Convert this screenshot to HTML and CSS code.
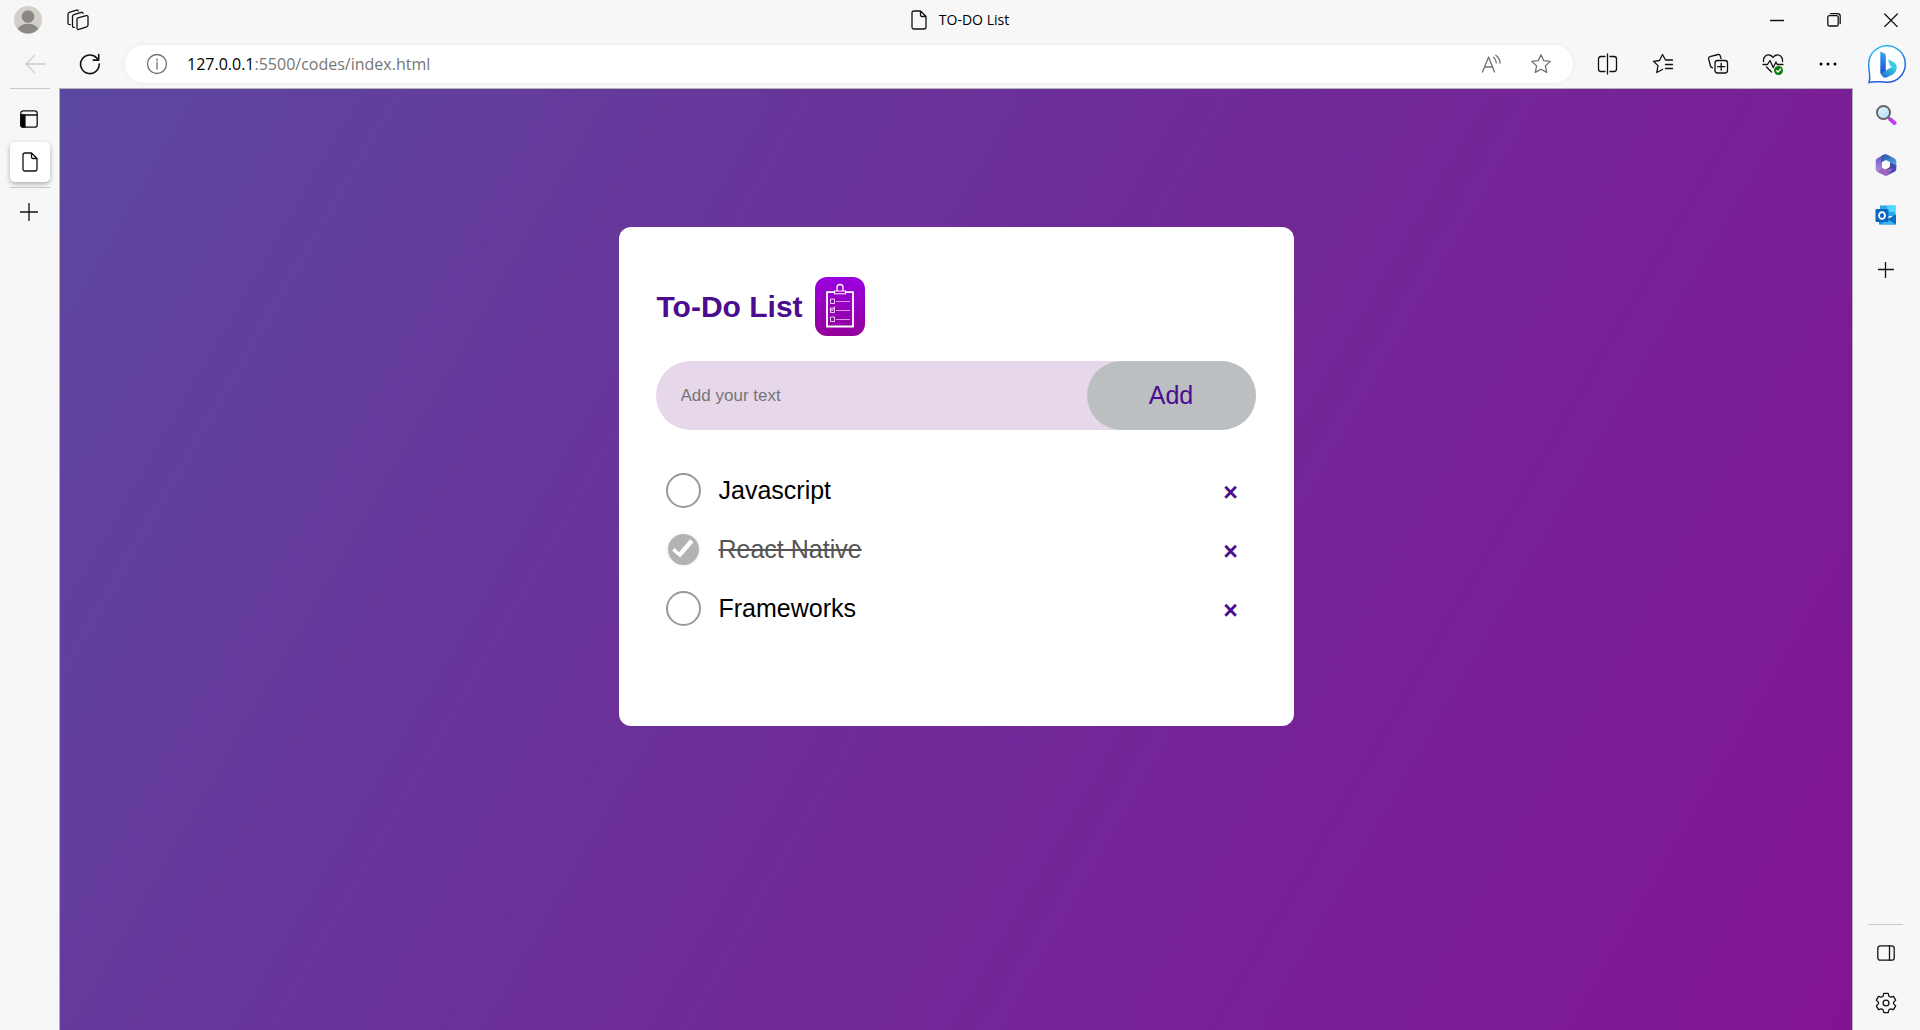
FILE: index.html
```html
<!DOCTYPE html>
<html lang="en">
<head>
<meta charset="utf-8">
<meta name="viewport" content="width=device-width, initial-scale=1">
<title>TO-DO List</title>
<link rel="stylesheet" href="styles.css">
</head>
<body>
<div class="browser">
  <header class="titlebar">
    <div class="titlebar-start">
      <button class="icon-button profile" aria-label="Profile">
        <svg width="28" height="28" viewBox="0 0 28 28"><defs><clipPath id="face"><circle cx="14" cy="14" r="13.5"/></clipPath></defs><circle cx="14" cy="14" r="14" fill="#d3d0cb"/><g fill="#8b8784" clip-path="url(#face)"><circle cx="14" cy="10.5" r="6.3"/><ellipse cx="14" cy="25" rx="11" ry="7.2"/></g></svg>
      </button>
      <button class="icon-button" aria-label="Workspaces">
        <svg width="22" height="22" viewBox="0 0 22 22" class="line"><path d="M11 8.9 19.2 6.6Q21 6.2 21 8V16Q21 17.4 19.7 17.8L12 20.3Q10 20.8 10 19V10.4Q10 9.2 11 8.9Z"/><path d="M7.5 18.4Q5.5 18.7 5.5 17V7.4Q5.5 6 6.8 5.6L14.3 3.3Q15.8 3 16 4.4"/><path d="M3.3 15.6Q1 15.8 1 14V5.4Q1 4 2.3 3.4L9.5 1.1Q11 .8 11.2 2"/></svg>
      </button>
    </div>
    <div class="window-title">
      <svg width="16" height="20" viewBox="0 0 16 20" class="line"><path d="M3 1H9.5L15 6.5V17Q15 19 13 19H3Q1 19 1 17V3Q1 1 3 1ZM9.5 1V5Q9.5 6.5 11 6.5H15"/></svg>
      <span>TO-DO List</span>
    </div>
    <div class="window-controls">
      <button class="icon-button" aria-label="Minimize"><svg width="14" height="14" viewBox="0 0 14 14" class="line"><path d="M.5 7.5H13.5"/></svg></button>
      <button class="icon-button" aria-label="Restore"><svg width="14" height="14" viewBox="0 0 14 14" class="line"><rect x=".8" y="2.6" width="10.4" height="10.4" rx="1.6"/><path d="M3.5.7H10.6Q13.2.7 13.2 3.3V10.6"/></svg></button>
      <button class="icon-button" aria-label="Close"><svg width="14" height="14" viewBox="0 0 14 14" class="line"><path d="M.7 1 13.3 13.6M13.3 1 .7 13.6"/></svg></button>
    </div>
  </header>

  <nav class="toolbar" aria-label="Navigation">
    <button class="icon-button" aria-label="Back" disabled><svg width="22" height="20" viewBox="0 0 22 20" class="line faint"><path d="M21 10H2M10.5 1.5 2 10 10.5 18.5"/></svg></button>
    <button class="icon-button" aria-label="Refresh"><svg width="22" height="22" viewBox="0 0 22 22" class="line bold"><path d="M20.2 11A9.3 9.3 0 1 1 17.8 5L19.5 7M19.7 1.5V7.1H14.2"/></svg></button>
    <div class="address">
      <svg width="22" height="22" viewBox="0 0 22 22" class="line grey"><circle cx="11" cy="11" r="9.5"/><path d="M11 9.5V16M11 6V7.6"/></svg>
      <p class="url"><span class="host">127.0.0.1</span>:5500/codes/index.html</p>
      <button class="icon-button" aria-label="Read aloud"><svg width="22" height="20" viewBox="0 0 22 20" class="line grey"><path d="M1.5 18 7.6 3 13.5 18M3.5 13H11.5M12.5 3.2Q15 5 15.3 8.8M14.8 1.2Q18.8 4 19 9"/></svg></button>
      <button class="icon-button" aria-label="Add to favorites"><svg width="22" height="22" viewBox="0 0 22 22" class="line grey"><path d="M11 1.8 13.7 7.7 20.2 8.4 15.4 12.9 16.7 19.4 11 16.2 5.3 19.4 6.6 12.9 1.8 8.4 8.3 7.7Z"/></svg></button>
    </div>
    <button class="icon-button" aria-label="Split screen"><svg width="22" height="22" viewBox="0 0 22 22" class="line"><path d="M10.500 1V21M8 3.500H4Q1.500 3.500 1.500 6V16Q1.500 18.500 4 18.500H8M13 3.500H17Q19.500 3.500 19.500 6V16Q19.500 18.500 17 18.500H13"/></svg></button>
    <button class="icon-button" aria-label="Favorites"><svg width="22" height="22" viewBox="0 0 22 22" class="line"><path d="M20.500 7H13.500L10.500 1.500 7.500 7.500 1.500 8.300 6 12.600 4.800 19.500 10.500 16.500M13.500 11.500H20.500M13.500 15.500H20.500"/></svg></button>
    <button class="icon-button" aria-label="Collections"><svg width="22" height="22" viewBox="0 0 22 22" class="line"><rect x="8" y="7.500" width="12.500" height="12.500" rx="2.500"/><path d="M14.200 10.200V17.300M10.700 13.700H17.800M14 5.500 13.300 3Q12.800 1.200 11 1.500L3 3.600Q1.300 4 1.600 5.800L3.300 12.500Q3.800 14.500 5.500 14.800"/></svg></button>
    <button class="icon-button" aria-label="Browser essentials"><svg width="22" height="22" viewBox="0 0 22 22" class="line"><path d="M1.500 8.500C1 3.500 4.500 1.500 7.300 2 9.500 2.300 11 4.500 11 4.500S12.500 2.300 14.700 2C17.500 1.500 21 3.500 20.500 8.500M1 11.500H5.500L8 7.500 11.200 14.500 14 9 15.200 11.500H21M4.500 14 9.500 19"/><circle cx="16.500" cy="17.500" r="4.500" fill="#107c10" stroke="none"/><path d="M14.500 17.600 16 19 18.600 16.200" stroke="#fff"/></svg></button>
    <button class="icon-button" aria-label="Settings and more"><svg width="22" height="22" viewBox="0 0 22 22"><circle cx="4" cy="11" r="1.500"/><circle cx="11" cy="11" r="1.500"/><circle cx="18" cy="11" r="1.500"/></svg></button>
    <button class="icon-button bing" aria-label="Bing Chat"><svg width="40" height="40" viewBox="0 0 40 40"><defs><linearGradient id="ring" x1="0" y1="0" x2=".4" y2="1"><stop stop-color="#2fc5f5"/><stop offset="1" stop-color="#1f58d8"/></linearGradient><linearGradient id="stem" x1="0" y1="0" x2="0" y2="1"><stop stop-color="#36a9f5"/><stop offset="1" stop-color="#1746cf"/></linearGradient><linearGradient id="bowl" x1="0" y1="1" x2="1" y2="0"><stop stop-color="#2163dd"/><stop offset="1" stop-color="#3fdcd8"/></linearGradient></defs><path d="M2 38.500C4 33 1.700 29 1.700 20A18.300 18.300 0 1 1 20 38.300C12 38.300 9 36.500 2 38.500Z" fill="#fff" stroke="url(#ring)" stroke-width="1.500"/><path d="M13.300 7.500 17.200 9.200Q18.800 10 18.800 12V27L14.700 31Q13.300 30 13.300 28Z" fill="url(#stem)"/><path d="M21 15.300 26.300 18Q30.500 20.200 29.500 25.500L24.500 22.500Q23 22 22.300 19.500Z" fill="#38cbe8"/><path d="M14 29.500 25 22.700 29.600 25Q29 28.500 26 30.300L19.500 33.500Q15.500 34.500 14 29.500Z" fill="url(#bowl)"/></svg></button>
  </nav>

  <aside class="rail rail-left" aria-label="Tabs">
    <hr>
    <button class="icon-button tab-actions" aria-label="Tab actions"><svg width="18" height="18" viewBox="0 0 18 18" class="line"><rect x=".8" y=".8" width="16.400" height="16.400" rx="2.500"/><path d="M1 5H17"/><path d="M.8 5H5V17.200H3Q.8 17 .8 15Z" fill="#000"/></svg></button>
    <button class="icon-button tab" aria-label="TO-DO List"><svg width="16" height="20" viewBox="0 0 16 20" class="line"><path d="M3 1H9.500L15 6.500V17Q15 19 13 19H3Q1 19 1 17V3Q1 1 3 1ZM9.500 1V5Q9.500 6.500 11 6.500H15"/></svg></button>
    <hr>
    <button class="icon-button new-tab" aria-label="New tab"><svg width="18" height="18" viewBox="0 0 18 18" class="line"><path d="M9 .5V17.500M.5 9H17.500"/></svg></button>
  </aside>

  <main class="page">
    <section class="todo">
      <h1 class="todo-title">To-Do List
        <svg width="50" height="59" viewBox="0 0 50 59"><defs><linearGradient id="badge" x1="0" y1="0" x2="0" y2="1"><stop stop-color="#9b00e0"/><stop offset="1" stop-color="#930099"/></linearGradient></defs><rect width="50" height="59" rx="12" fill="url(#badge)"/><g fill="none" stroke="#fff"><path d="M19 15.200H12V49.500H38V15.200H31" stroke-width="1.800"/><rect x="19.500" y="14" width="11" height="2.800"/><path d="M22 14V10.500Q22 7.500 25 7.500T28 10.500V14" stroke-width="1.300"/><g stroke-width=".8"><path d="M15.500 22H19.500V26.500H15.500ZM15.500 31H19.500V35.500H15.500ZM15.500 40H19.500V44.500H15.500ZM15.500 32 17 34 20 29.500"/><path d="M21 24.500H35M21 33.500H35M21 42.500H35" stroke-opacity=".75"/></g></g></svg>
      </h1>
      <form class="entry">
        <input class="entry-text" type="text" placeholder="Add your text" aria-label="New task">
        <button class="entry-add" type="button">Add</button>
      </form>
      <ul class="tasks">
        <li class="task"><input type="checkbox" id="task-1"><label for="task-1">Javascript</label><button class="remove" aria-label="Remove Javascript">×</button></li>
        <li class="task"><input type="checkbox" id="task-2" checked><label for="task-2">React Native</label><button class="remove" aria-label="Remove React Native">×</button></li>
        <li class="task"><input type="checkbox" id="task-3"><label for="task-3">Frameworks</label><button class="remove" aria-label="Remove Frameworks">×</button></li>
      </ul>
    </section>
  </main>

  <aside class="rail rail-right" aria-label="Sidebar">
    <button class="icon-button" aria-label="Search"><svg width="22" height="22" viewBox="0 0 22 22"><defs><linearGradient id="lens" x1="0" y1="0" x2="1" y2="1"><stop stop-color="#e8f7ff"/><stop offset="1" stop-color="#addcf8"/></linearGradient></defs><path d="M13 13 15.500 15.500" stroke="#555" stroke-width="2"/><path d="M15.500 15.500 19.500 19" stroke="#c239f0" stroke-width="4" stroke-linecap="round"/><circle cx="8.500" cy="8.500" r="6.500" fill="url(#lens)" stroke="#666" stroke-width="2"/></svg></button>
    <button class="icon-button" aria-label="Microsoft 365"><svg width="22" height="22" viewBox="0 0 22 22"><defs><linearGradient id="m1" x1="0" y1="0" x2="0" y2="1"><stop stop-color="#5c59c9"/><stop offset="1" stop-color="#b58be0"/></linearGradient><linearGradient id="m2" x1="0" y1="0" x2="1" y2="1"><stop stop-color="#294a9e"/><stop offset="1" stop-color="#55b5f1"/></linearGradient></defs><path d="M8 1 2 4.500Q.7 5.500.7 7V15Q.7 17 2.300 18L7 15.500V8Q7 6.500 8 5.500L13 2Q10.500-.5 8 1Z" fill="url(#m1)"/><path d="M8 1Q10.500-.5 13 1L19.500 4.500Q21.300 5.500 21.300 7.500V13L15 10.500V8L11 6 6 8.500V5Q6 2.300 8 1Z" fill="url(#m2)"/><path d="M15 9 21.300 11V15Q21.300 16.500 20 17.500L12 21.500 9 16.500 13 14Q15 13 15 11.500Z" fill="#454cae"/><path d="M2.300 18 7 14 10.500 15.500 18 14.500 12.500 21.200Q11 22.300 9.500 21.500Z" fill="#9a65bd"/><circle cx="11" cy="11" r="3.600" fill="#fff"/></svg></button>
    <button class="icon-button" aria-label="Outlook"><svg width="22" height="22" viewBox="0 0 22 22"><path d="M5 1.500H20.500V12H5Z" fill="#28a8ea"/><path d="M12 1.500H20.500V8H12Z" fill="#50d9ff"/><path d="M5 8H13V15H5Z" fill="#0a5ba8"/><path d="M4 20.500V12L13 15 21 10.500V20.500Z" fill="#1490df"/><path d="M13 15 21 10.500V20.500Z" fill="#0b70bd"/><path d="M12 15.500 21.500 20.500H6Z" fill="#35b8f1"/><rect x=".5" y="5" width="13" height="13" rx="1.200" fill="#0867bc"/><ellipse cx="7" cy="11.500" rx="3" ry="3.400" fill="none" stroke="#fff" stroke-width="1.800"/></svg></button>
    <button class="icon-button customize" aria-label="Customize"><svg width="16" height="16" viewBox="0 0 16 16" class="line"><path d="M7.500.5V15.500M.5 7.500H15.500"/></svg></button>
    <hr>
    <button class="icon-button" aria-label="Hide sidebar"><svg width="18" height="16" viewBox="0 0 18 16" class="line"><rect x=".8" y=".8" width="16.400" height="14.400" rx="2.500"/><path d="M12.500 1V15"/></svg></button>
    <button class="icon-button" aria-label="Settings"><svg width="22" height="22" viewBox="0 0 22 22" class="line"><circle cx="11" cy="11" r="2.900"/><path d="M8.800 1.300H13.200L13.900 4.200 15.600 5.200 18.500 4.300 20.700 8.100 18.600 10.100V11.900L20.700 13.900 18.500 17.700 15.600 16.800 13.900 17.800 13.200 20.700H8.800L8.100 17.800 6.400 16.800 3.500 17.700 1.300 13.900 3.400 11.900V10.100L1.300 8.100 3.500 4.300 6.400 5.200 8.100 4.200Z"/></svg></button>
  </aside>
</div>
</body>
</html>
```
FILE: styles.css
```css
* { box-sizing: border-box; }

body {
  margin: 0;
  background: #f7f7f7;
  color: #000;
  font-family: "Open Sans", "Noto Sans", sans-serif;
}

button, input { margin: 0; font: inherit; }

.browser {
  display: grid;
  grid-template-columns: 59px 1fr 67px;
  grid-template-rows: 40px 48px 1fr;
  min-height: 100vh;
}

.icon-button {
  display: flex;
  align-items: center;
  justify-content: center;
  padding: 0;
  border: 0;
  background: none;
}

.line {
  fill: none;
  stroke: #111;
  stroke-width: 1.3;
  stroke-linecap: round;
  stroke-linejoin: round;
}
.line.bold { stroke-width: 1.6; }
.line.grey { stroke: #707070; }
.line.faint { stroke: #cdcdcd; }

/* Title bar */
.titlebar {
  grid-column: 1 / -1;
  display: grid;
  grid-template-columns: 1fr auto 1fr;
  align-items: center;
}
.titlebar-start { display: flex; gap: 25px; padding-left: 14px; }
.window-title {
  display: flex;
  align-items: center;
  gap: 12px;
  font-size: 14px;
  line-height: 20px;
}
.window-controls { display: flex; justify-content: flex-end; padding-right: 1px; }
.window-controls .icon-button { width: 57px; height: 40px; }

/* Toolbar */
.toolbar {
  grid-column: 1 / -1;
  display: flex;
  align-items: center;
  padding: 0 2px 0 7px;
}
.toolbar > .icon-button { width: 55px; height: 40px; }
.toolbar > .bing { width: 63px; }
.address {
  flex: 1;
  display: flex;
  align-items: center;
  height: 38px;
  margin: 0 7px 0 8px;
  padding: 0 8px 0 21px;
  border-radius: 19px;
  background: #fff;
  box-shadow: 0 0 5px rgba(0, 0, 0, 0.06);
}
.address .icon-button { width: 49px; height: 38px; }
.url {
  flex: 1;
  margin: 0 0 0 19px;
  color: #767676;
  font-size: 16px;
  line-height: 24px;
}
.host { color: #000; }

/* Side rails */
.rail { display: flex; flex-direction: column; align-items: center; }
.rail hr { width: 40px; height: 1px; margin: 0; border: 0; background: #c8c8c8; }
.rail-left .icon-button { width: 40px; height: 40px; }
.rail-left .tab-actions { margin: 10px 0 3px; padding-right: 2px; }
.rail-left .tab {
  margin-bottom: 5px;
  border-radius: 5px;
  background: #fff;
  box-shadow: 0 2px 5px rgba(0, 0, 0, 0.3);
}
.rail-left .new-tab { margin-top: 4px; padding-right: 2px; }
.rail-right { padding: 2px 2px 2px 0; }
.rail-right .icon-button { width: 50px; height: 50px; }
.rail-right .customize { margin: 5px 0 auto; }
.rail-right hr { width: 35px; margin-bottom: 3px; }

/* Page */
.page {
  padding: 138px 20px 40px;
  border: 1px solid #b4b4b4;
  border-bottom: 0;
  background: linear-gradient(120deg, #5c489f, #6f2b98 50%, #821494);
  font-family: "Liberation Sans", Arial, sans-serif;
}
.todo {
  max-width: 675px;
  margin: 0 auto;
  padding: 50px 38px 88px 37px;
  border-radius: 12px;
  background: #fff;
}
.todo-title {
  display: flex;
  align-items: center;
  gap: 12px;
  margin: 0 0 25px;
  padding-left: 1px;
  color: #4b0c8f;
  font-size: 30px;
  line-height: 34px;
}
.entry {
  display: flex;
  height: 69px;
  margin-bottom: 31px;
  border-radius: 35px;
  background: #e6d8ea;
}
.entry-text {
  flex: 1;
  min-width: 0;
  padding: 0 25px;
  border: 0;
  outline: 0;
  background: none;
  font-size: 17px;
}
.entry-text::placeholder { color: #757575; }
.entry-add {
  width: 169px;
  border: 0;
  border-radius: 35px;
  background: #bbbfc2;
  color: #4b0c8f;
  font-size: 25px;
}
.tasks { margin: 0; padding: 0 0 0 10px; list-style: none; }
.task {
  display: flex;
  align-items: center;
  height: 59px;
  font-size: 25px;
}
.task input {
  width: 35px;
  height: 35px;
  border: 2px solid #999;
  border-radius: 50%;
  background: #fff;
  appearance: none;
}
.task input:checked {
  border-color: #f8f8f8;
  background: #b3b3b3;
}
.task input:checked::before {
  content: "";
  display: block;
  height: 100%;
  background: #fff;
  clip-path: polygon(15% 54%, 23% 45%, 37% 59%, 73% 17%, 84% 27%, 41% 76%);
}
.task label { flex: 1; margin-left: 18px; }
.task input:checked + label { color: #555; text-decoration: line-through; }
.remove {
  width: 50px;
  height: 50px;
  padding: 4px 0 0;
  border: 0;
  background: none;
  color: #4b0c8f;
  font-size: 25px;
  font-weight: bold;
}
```
